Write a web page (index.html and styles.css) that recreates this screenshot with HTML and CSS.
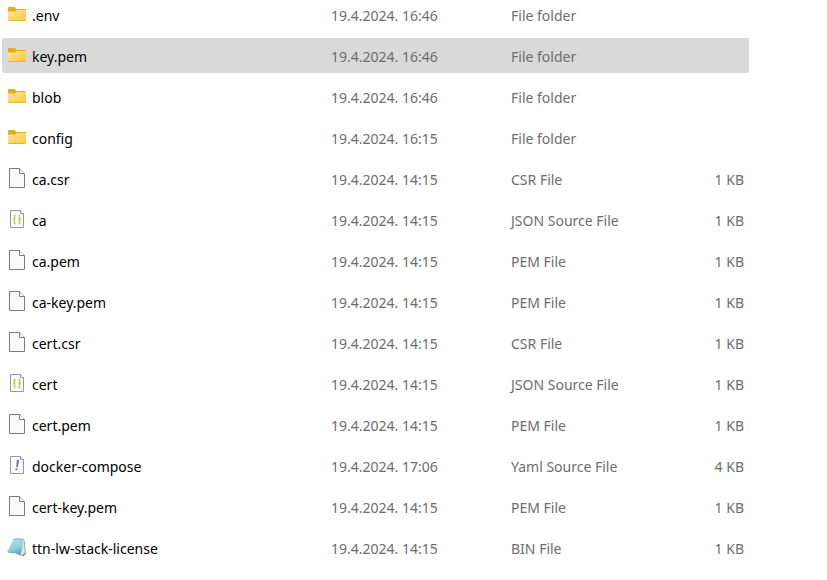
FILE: index.html
```html
<!DOCTYPE html>
<html lang="en">
<head>
    <meta charset="UTF-8">
    <meta name="viewport" content="width=device-width, initial-scale=1.0">
    <title>Files</title>
    <link rel="stylesheet" href="styles.css">
</head>
<body>

<!-- icon shapes shared by the rows -->
<svg class="icon-defs" aria-hidden="true">
    <defs>
        <linearGradient id="folder-front" x1="0" y1="0" x2="1" y2="1">
            <stop offset="0" stop-color="#ffe59a"/>
            <stop offset="1" stop-color="#fcc83c"/>
        </linearGradient>
        <linearGradient id="note-cover" x1="0.3" y1="0" x2="0.7" y2="1">
            <stop offset="0" stop-color="#b9e2ea"/>
            <stop offset="0.6" stop-color="#8accda"/>
            <stop offset="1" stop-color="#4a9fb8"/>
        </linearGradient>
    </defs>
    <symbol id="folder" viewBox="0 0 20 21">
        <path d="M1 4Q1 3 2 3H7.500L9.500 5H18Q19 5 19 6V10H1z" fill="#e8a91c"/>
        <path d="M1 7.500h7L9.500 6H19v10q0 1-1 1H2q-1 0-1-1z" fill="url(#folder-front)"/>
        <path d="M1.500 16.500h17" stroke="#e9b43a" fill="none"/>
    </symbol>
    <symbol id="file" viewBox="0 0 20 21">
        <path d="M2.500 .5h10l5 5v14h-15z" fill="#fafafa" stroke="#7c7c7c"/>
        <path d="M12.500 .5v5h5" fill="#fff" stroke="#7c7c7c"/>
    </symbol>
    <symbol id="source" viewBox="0 0 20 21">
        <path d="M3.500 1.500h10l3 3v14h-13z" fill="#fafafa" stroke="#979797"/>
        <path d="M13.500 1.500v3h3" fill="#fff" stroke="#979797"/>
    </symbol>
    <symbol id="json" viewBox="0 0 20 21">
        <use href="#source"/>
        <path d="M8.500 6.500h-1V10H6h1.500v4.500h1M11.500 6.500h1V10H14h-1.500v4.500h-1" fill="none" stroke="#c6c850" stroke-width="1.500"/>
    </symbol>
    <symbol id="yaml" viewBox="0 0 20 21">
        <use href="#source"/>
        <path d="M9.800 5h2.500l-1.500 7H9.200zM8.700 13.200h2l-.4 2h-2z" fill="#9068b0"/>
    </symbol>
    <symbol id="notepad" viewBox="0 0 20 21">
        <path d="M17.500 3l1.300 14-2.800 2.300-3-1.300z" fill="#8a7761"/>
        <path d="M17 2.500l1 13.500-3 2.500-1.500-1z" fill="#dfe3e5"/>
        <path d="M6 2.500Q11 1 17 2.500L13.500 17.500Q8 14.500 .5 14.500z" fill="url(#note-cover)"/>
        <path d="M.5 14.500Q8 14.500 13.500 17.500v1Q8 15.500 1 15.500z" fill="#6b929f"/>
        <path d="M6.500 2.500Q11 1 17 2.500" fill="none" stroke="#9aa5a8"/>
    </symbol>
</svg>

<table class="file-list">
    <colgroup>
        <col class="col-name">
        <col class="col-date">
        <col class="col-type">
        <col class="col-size">
    </colgroup>
    <tbody>
        <tr>
            <td><div class="name"><svg class="icon"><use href="#folder"/></svg>.env</div></td>
            <td>19.4.2024. 16:46</td><td>File folder</td><td></td>
        </tr>
        <tr class="selected">
            <td><div class="name"><svg class="icon"><use href="#folder"/></svg>key.pem</div></td>
            <td>19.4.2024. 16:46</td><td>File folder</td><td></td>
        </tr>
        <tr>
            <td><div class="name"><svg class="icon"><use href="#folder"/></svg>blob</div></td>
            <td>19.4.2024. 16:46</td><td>File folder</td><td></td>
        </tr>
        <tr>
            <td><div class="name"><svg class="icon"><use href="#folder"/></svg>config</div></td>
            <td>19.4.2024. 16:15</td><td>File folder</td><td></td>
        </tr>
        <tr>
            <td><div class="name"><svg class="icon"><use href="#file"/></svg>ca.csr</div></td>
            <td>19.4.2024. 14:15</td><td>CSR File</td><td>1 KB</td>
        </tr>
        <tr>
            <td><div class="name"><svg class="icon"><use href="#json"/></svg>ca</div></td>
            <td>19.4.2024. 14:15</td><td>JSON Source File</td><td>1 KB</td>
        </tr>
        <tr>
            <td><div class="name"><svg class="icon"><use href="#file"/></svg>ca.pem</div></td>
            <td>19.4.2024. 14:15</td><td>PEM File</td><td>1 KB</td>
        </tr>
        <tr>
            <td><div class="name"><svg class="icon"><use href="#file"/></svg>ca-key.pem</div></td>
            <td>19.4.2024. 14:15</td><td>PEM File</td><td>1 KB</td>
        </tr>
        <tr>
            <td><div class="name"><svg class="icon"><use href="#file"/></svg>cert.csr</div></td>
            <td>19.4.2024. 14:15</td><td>CSR File</td><td>1 KB</td>
        </tr>
        <tr>
            <td><div class="name"><svg class="icon"><use href="#json"/></svg>cert</div></td>
            <td>19.4.2024. 14:15</td><td>JSON Source File</td><td>1 KB</td>
        </tr>
        <tr>
            <td><div class="name"><svg class="icon"><use href="#file"/></svg>cert.pem</div></td>
            <td>19.4.2024. 14:15</td><td>PEM File</td><td>1 KB</td>
        </tr>
        <tr>
            <td><div class="name"><svg class="icon"><use href="#yaml"/></svg>docker-compose</div></td>
            <td>19.4.2024. 17:06</td><td>Yaml Source File</td><td>4 KB</td>
        </tr>
        <tr>
            <td><div class="name"><svg class="icon"><use href="#file"/></svg>cert-key.pem</div></td>
            <td>19.4.2024. 14:15</td><td>PEM File</td><td>1 KB</td>
        </tr>
        <tr>
            <td><div class="name"><svg class="icon"><use href="#notepad"/></svg>ttn-lw-stack-license</div></td>
            <td>19.4.2024. 14:15</td><td>BIN File</td><td>1 KB</td>
        </tr>
    </tbody>
</table>

</body>
</html>
```
FILE: styles.css
```css
body {
    font-family: "Segoe UI", "Noto Sans", "Open Sans", sans-serif;
    font-size: 14px;
    line-height: 23px;
    background-color: #fff;
    color: #6d6d6d;
    margin: 0;
    padding: 0 78px 0 2px;
    overflow-x: hidden;
}

.icon-defs {
    display: block;
    width: 0;
    height: 0;
}

/* the list is scrolled a little, so the first row starts above the edge */
.file-list {
    width: 100%;
    margin-top: -9px;
    table-layout: fixed;
    border-collapse: separate;
    border-spacing: 0 6px;
}

.col-name {
    width: 324px;
}

.col-date {
    width: 180px;
}

.col-size {
    width: 80px;
}

.file-list td {
    padding: 7px 5px 5px;
    white-space: nowrap;
}

.file-list td:first-child {
    color: #000;
    border-radius: 2px 0 0 2px;
}

.file-list td:last-child {
    text-align: right;
    border-radius: 0 2px 2px 0;
}

.file-list .selected td {
    background-color: #d9d9d9;
}

.name {
    display: flex;
    align-items: flex-start;
    gap: 5px;
}

.icon {
    width: 20px;
    height: 21px;
    flex: none;
}
```
